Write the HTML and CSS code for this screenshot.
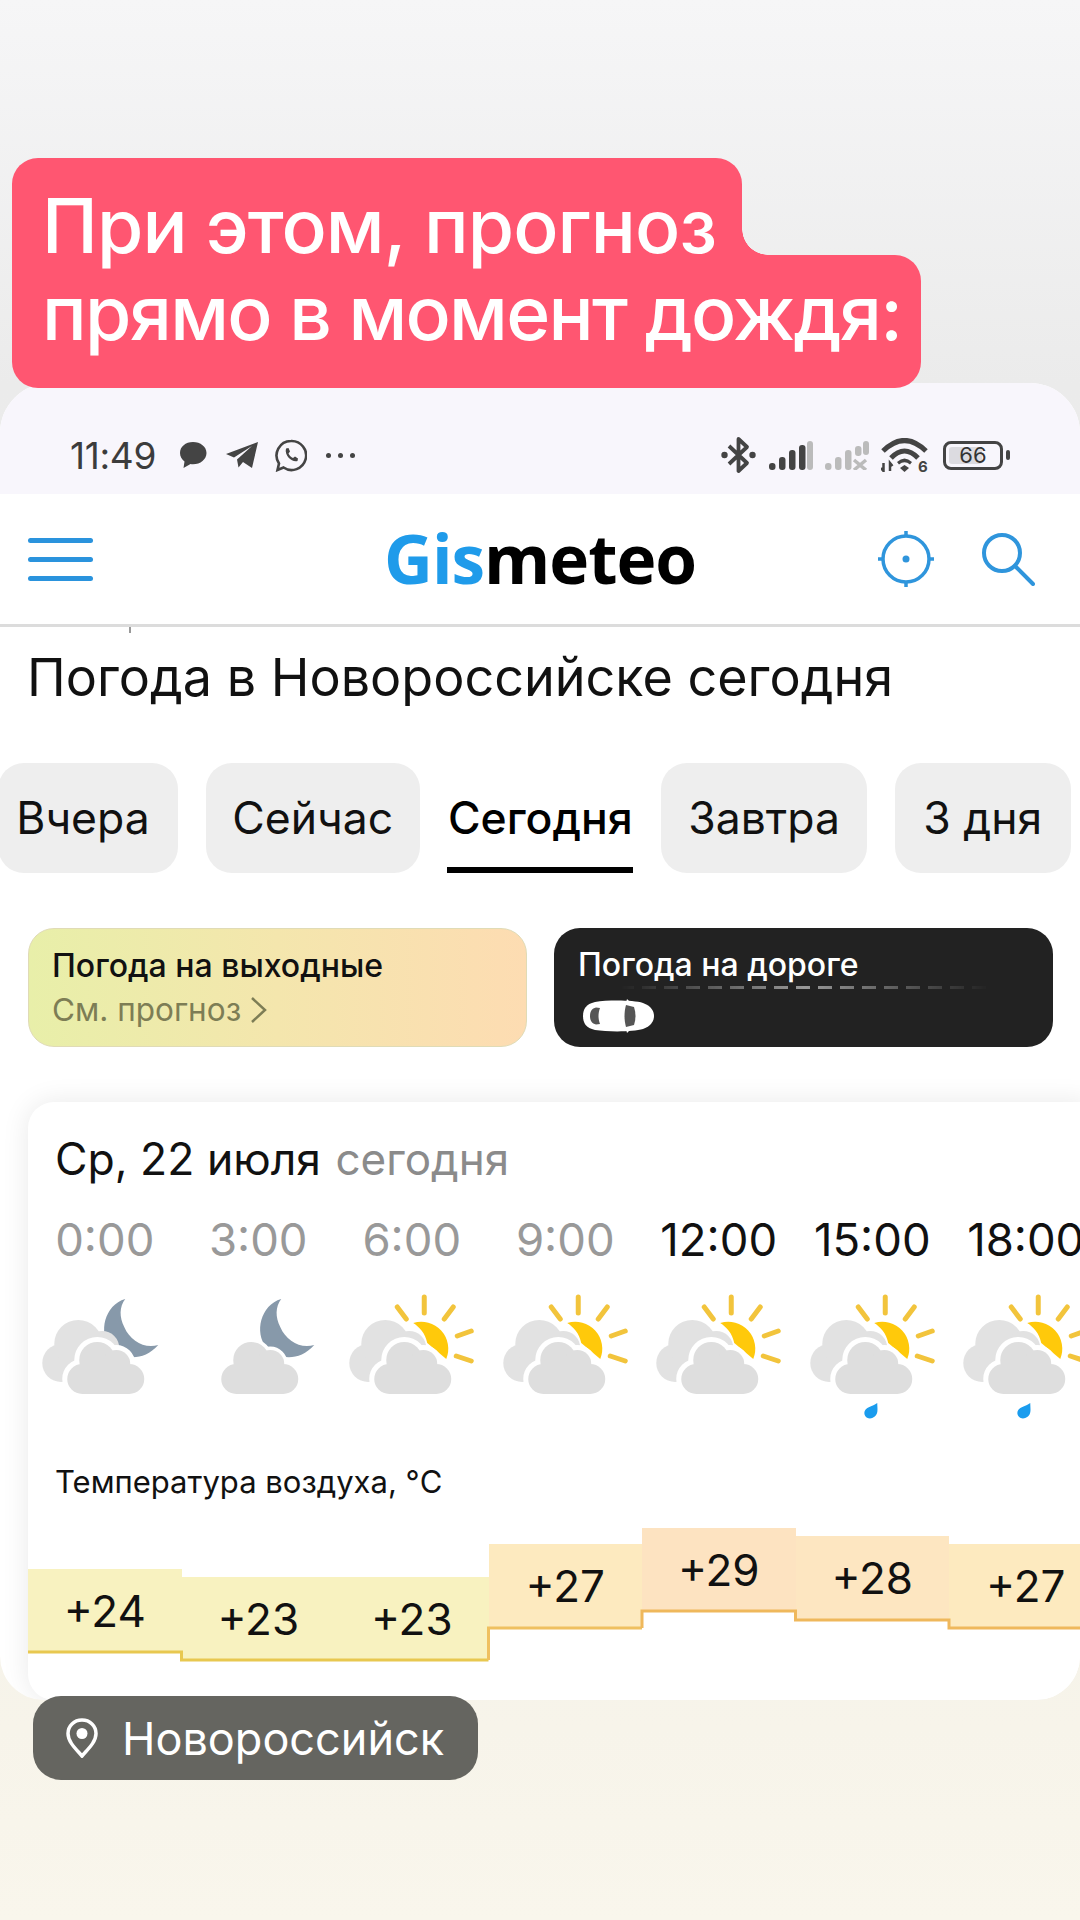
FILE: index.html
```html
<!DOCTYPE html>
<html lang="ru">
<head>
<meta charset="utf-8">
<title>Gismeteo</title>
<link rel="stylesheet" href="styles.css">
</head>
<body>
<svg class="sprite" width="0" height="0" aria-hidden="true">
  <defs>
    <g id="cloud-shape">
      <circle cx="54" cy="88" r="15"/>
      <circle cx="69" cy="69" r="18"/>
      <circle cx="88" cy="73" r="14"/>
      <circle cx="101" cy="88" r="15"/>
      <rect x="54" y="72" width="47" height="31"/>
    </g>
    <g id="back-cloud" fill="#e2e2e2">
      <circle cx="33" cy="72" r="19"/>
      <circle cx="50" cy="53" r="24"/>
      <circle cx="74" cy="57" r="17"/>
      <rect x="36" y="58" width="50" height="34"/>
    </g>
    <g id="clouds">
      <use href="#back-cloud"/>
      <use href="#cloud-shape" fill="#fff" stroke="#fff" stroke-width="10"/>
      <use href="#cloud-shape" fill="#dedede"/>
    </g>
    <g id="sun">
      <path d="M78 32A27 27 0 0 1 111 68L92 52C90 42 84 36 78 32Z" fill="#ffc90b"/>
      <g stroke="#f2c43c" stroke-width="5" stroke-linecap="round">
        <path d="M89 6V22M62 16L71 28M118 16L109 28M122 45L136 40M121 65L136 70"/>
      </g>
    </g>
    <path id="moon" d="M99 8C78 14 72 42 84 56C94 68 116 72 132 54C118 58 104 50 98 36C93 26 93 16 99 8Z" fill="#8799aa"/>
    <path id="drop" d="M81 112C81 118 83 124 76 127C71 129 66 124 69 119C71 116 77 115 81 112Z" fill="#1a9cee"/>
  </defs>
</svg>

<div class="page">
  <div class="caption">
    <div class="caption-line caption-first">При этом, прогноз</div>
    <div class="caption-line caption-second">прямо в момент дождя:</div>
  </div>

  <div class="phone">
    <div class="statusbar">
      <div class="status-group">
        <span class="clock">11:49</span>
        <svg class="st-chat" viewBox="0 0 28 28"><path d="M14 1C6.500 1 1 5.700 1 12C1 15.500 2.800 18.500 5.500 20.400L4.500 27L11.500 23.100C12.300 23.200 13.100 23.300 14 23.300C21.500 23.300 27.500 18.300 27.500 12C27.500 5.700 21.500 1 14 1Z" fill="#444"/></svg>
        <svg class="st-tg" viewBox="0 0 32 28"><path d="M32 1L26 27L17 21L12.500 26.500L11 18.500L26 5L8 16.500L0 13Z" fill="#444"/></svg>
        <svg class="st-wa" viewBox="0 0 32 33"><path d="M16 2A14.500 14.500 0 1 1 8.500 28.500L2.500 31L4 24.500A14.500 14.500 0 0 1 16 2Z" fill="none" stroke="#444" stroke-width="2.600"/><path d="M11 9.500L13.500 9L15 12.500L13.500 14.500C14.500 16.500 16 18 18 19L20 17.500L23 19.500L22.500 22C18 24 9 17 11 9.500Z" fill="#444"/></svg>
        <span class="more"><i></i><i></i><i></i></span>
      </div>
      <div class="status-group status-right">
        <svg class="st-bt" viewBox="0 0 35 38"><path d="M8 10L26 27L17.500 35V3L26 11L8 28" fill="none" stroke="#444" stroke-width="3.800" stroke-linejoin="round"/><circle cx="3.500" cy="19" r="3.200" fill="#444"/><circle cx="31.500" cy="19" r="3.200" fill="#444"/></svg>
        <svg class="st-sig" viewBox="0 0 44 29"><g fill="#444"><rect x="0" y="22" width="6.500" height="7" rx="3"/><rect x="10" y="16" width="6.500" height="13" rx="3"/><rect x="20" y="9" width="6.500" height="20" rx="3"/><rect x="30" y="4" width="6.500" height="25" rx="3"/></g><rect x="38" y="0" width="6" height="29" rx="3" fill="#bbb"/></svg>
        <svg class="st-sig" viewBox="0 0 44 29"><g fill="#bbb"><rect x="0" y="22" width="6.500" height="7" rx="3"/><rect x="10" y="16" width="6.500" height="13" rx="3"/><rect x="20" y="9" width="6.500" height="20" rx="3"/><rect x="30" y="5" width="6.500" height="10" rx="3"/><rect x="38" y="0" width="6" height="14" rx="3"/></g><path d="M29 19L41 29M41 19L29 29" stroke="#bbb" stroke-width="3.500"/></svg>
        <svg class="st-wifi" viewBox="0 0 47 34"><g fill="none" stroke="#444"><path d="M2 13Q23.500 -8 45 13" stroke-width="5"/><path d="M10 20Q23.500 6 37 20" stroke-width="5"/></g><path d="M16 24Q23.500 17 31 24L29 26.500Q23.500 22 18 26.500Z" fill="#444"/><path d="M23.500 27L28 30L23.500 34L19 30Z" fill="#444"/><path d="M2.500 25V33L0 30M9 33V25L11.500 28" fill="none" stroke="#444" stroke-width="2.500"/><text class="wifi-six" x="37" y="34">6</text></svg>
        <span class="battery"><span class="battery-box"><span class="battery-level"></span><span class="battery-num">66</span></span><span class="battery-nub"></span></span>
      </div>
    </div>

    <header class="appbar">
      <div class="burger"><i></i><i></i><i></i></div>
      <div class="logo"><span class="logo-blue">Gis</span>meteo</div>
      <div class="appbar-actions">
        <svg class="ic-target" viewBox="0 0 56 56"><g fill="none" stroke="#2f95dc" stroke-width="3.500"><circle cx="28" cy="28" r="23"/><path d="M28 0V5M28 51V56M0 28H5M51 28H56"/></g><circle cx="28" cy="28" r="3.500" fill="#2f95dc"/></svg>
        <svg class="ic-search" viewBox="0 0 54 54"><circle cx="21" cy="21" r="18" fill="none" stroke="#2f95dc" stroke-width="4"/><path d="M34 34L52 52" stroke="#2f95dc" stroke-width="4" stroke-linecap="round"/></svg>
      </div>
    </header>

    <main class="content">
      <i class="crumb-tick"></i>
      <h1 class="title">Погода в Новороссийске сегодня</h1>

      <nav class="tabs">
        <a class="tab tab-first">Вчера</a>
        <a class="tab tab-now">Сейчас</a>
        <a class="tab tab-active">Сегодня</a>
        <a class="tab tab-tomorrow">Завтра</a>
        <a class="tab tab-three">3 дня</a>
      </nav>

      <section class="promos">
        <div class="promo promo-weekend">
          <div class="promo-title">Погода на выходные</div>
          <div class="promo-sub">См. прогноз
            <svg class="chevron" viewBox="0 0 17 28"><path d="M2 2L15 14L2 26" fill="none" stroke="#7d7d55" stroke-width="2.500"/></svg>
          </div>
        </div>
        <div class="promo promo-road">
          <div class="promo-title">Погода на дороге</div>
          <div class="road-dash"></div>
          <svg class="car" viewBox="0 0 71 34">
            <path d="M12 3C25 1 50 1 60 4C68 7 71 12 71 17C71 22 68 27 60 30C50 33 25 33 12 31C3 29 0 24 0 17C0 10 3 5 12 3Z" fill="#fff"/>
            <path d="M7 17C7 12 9 9.500 13 8.500L17 9C15 14 15 20 17 25L13 25.500C9 24.500 7 22 7 17Z" fill="#555"/>
            <path d="M43 6L51 8C53 14 53 20 51 26L43 28C41 21 41 13 43 6Z" fill="#555"/>
            <path d="M43 4L44 0L48 4ZM43 30L44 34L48 30Z" fill="#fff"/>
          </svg>
        </div>
      </section>

      <section class="forecast">
        <div class="fc-date">Ср, 22 июля <span class="fc-today">сегодня</span></div>
        <div class="fc-row fc-hours">
          <div class="hour hour-past">0:00</div>
          <div class="hour hour-past">3:00</div>
          <div class="hour hour-past">6:00</div>
          <div class="hour hour-past">9:00</div>
          <div class="hour">12:00</div>
          <div class="hour">15:00</div>
          <div class="hour">18:00</div>
        </div>
        <div class="fc-row fc-icons">
          <svg class="wx" viewBox="0 0 153 130"><use href="#moon" transform="translate(-2 0)"/><use href="#clouds"/></svg>
          <svg class="wx" viewBox="0 0 153 130"><use href="#moon"/><use href="#cloud-shape" fill="#fff" stroke="#fff" stroke-width="7"/><use href="#cloud-shape" fill="#dedede"/></svg>
          <svg class="wx" viewBox="0 0 153 130"><use href="#sun"/><use href="#clouds"/></svg>
          <svg class="wx" viewBox="0 0 153 130"><use href="#sun"/><use href="#clouds"/></svg>
          <svg class="wx" viewBox="0 0 153 130"><use href="#sun"/><use href="#clouds"/></svg>
          <svg class="wx" viewBox="0 0 153 130"><use href="#sun"/><use href="#clouds"/><use href="#drop"/></svg>
          <svg class="wx" viewBox="0 0 153 130"><use href="#sun"/><use href="#clouds"/><use href="#drop"/></svg>
        </div>
        <div class="fc-label">Температура воздуха, °C</div>
        <div class="chart">
          <div class="bar bar-24"><span>+24</span></div>
          <div class="bar bar-23"><span>+23</span></div>
          <div class="bar bar-23"><span>+23</span></div>
          <div class="bar bar-27"><span>+27</span></div>
          <div class="bar bar-29"><span>+29</span></div>
          <div class="bar bar-28"><span>+28</span></div>
          <div class="bar bar-27"><span>+27</span></div>
          <svg class="chart-line" viewBox="0 0 1074 140" fill="none" stroke-width="3">
            <path d="M0 124H153.500V132H460.500" stroke="#e8c850"/>
            <path d="M460.500 132V100H614" stroke="#efc060"/>
            <path d="M614 100V83H767.500V92H921V100H1074" stroke="#efb85c"/>
          </svg>
        </div>
      </section>
    </main>
  </div>

  <div class="place">
    <svg class="pin" viewBox="0 0 32 40"><path d="M16 2C8 2 2 8 2 15.500C2 24 10 31 16 38C22 31 30 24 30 15.500C30 8 24 2 16 2Z" fill="none" stroke="#fff" stroke-width="3.500"/><circle cx="16" cy="15.500" r="5.500" fill="#fff"/></svg>
    <span>Новороссийск</span>
  </div>
</div>
</body>
</html>
```

FILE: styles.css
```css
* { box-sizing: border-box; }

html, body { margin: 0; padding: 0; }

body {
  width: 1080px;
  height: 1920px;
  overflow: hidden;
  font-family: Inter, "Noto Sans", "Liberation Sans", sans-serif;
  color: #111;
}

.sprite { position: absolute; }

.page {
  position: relative;
  width: 1080px;
  height: 1920px;
  padding-top: 383px;
  background: linear-gradient(180deg, #f6f6f7 0%, #ebebeb 20%, #f0efea 60%, #f7f4ea 90%, #f9f6ec 100%);
}

/* caption overlay */
.caption {
  position: absolute;
  z-index: 3;
  top: 158px;
  left: 12px;
  display: flex;
  flex-direction: column;
  align-items: flex-start;
  color: #fff;
  font-size: 75px;
  letter-spacing: -1.700px;
  font-weight: 500;
  line-height: 87px;
  white-space: nowrap;
}

.caption-line {
  position: relative;
  background: #ff5671;
  padding-left: 30px;
}

.caption-first {
  z-index: 1;
  width: 730px;
  height: 97px;
  padding-top: 24px;
  letter-spacing: -.900px;
  border-radius: 26px 26px 0 0;
}

.caption-second {
  width: 909px;
  height: 133px;
  padding-top: 14px;
  border-radius: 0 26px 26px 26px;
}

.caption-second::before {
  content: "";
  position: absolute;
  left: 730px;
  top: -26px;
  width: 26px;
  height: 26px;
  background: radial-gradient(circle at 100% 0, transparent 25.500px, #ff5671 26px);
}

/* phone */
.phone {
  height: 1317px;
  border-radius: 50px 50px 44px 44px;
  overflow: hidden;
  background: #fff;
  display: flex;
  flex-direction: column;
}

.statusbar {
  height: 111px;
  flex: none;
  background: #f8f6fc;
  padding: 55px 70px 0 70px;
  display: flex;
  justify-content: space-between;
  align-items: flex-start;
}

.status-group {
  display: flex;
  align-items: center;
  height: 34px;
}

.clock {
  font-size: 37px;
  letter-spacing: -.300px;
  color: #3c3c3c;
  margin-right: 24px;
  width: 85px;
}

.st-chat { width: 28px; height: 28px; margin-right: 19px; }
.st-tg { width: 32px; height: 28px; margin-right: 17px; }
.st-wa { width: 32px; height: 33px; margin-right: 19px; }

.more { display: flex; gap: 7px; }
.more i { width: 5px; height: 5px; border-radius: 50%; background: #444; }

.status-right { margin-right: 0; }

.st-bt { width: 35px; height: 38px; margin-right: 13px; }
.st-sig { width: 44px; height: 29px; margin-right: 12px; }
.st-wifi { width: 47px; height: 34px; margin-right: 15px; }

.wifi-six { font-size: 15px; font-weight: 700; fill: #444; font-family: Inter, sans-serif; }

.battery { display: flex; align-items: center; gap: 3px; }

.battery-box {
  position: relative;
  width: 60px;
  height: 29px;
  border: 3px solid #444;
  border-radius: 8px;
  display: flex;
  align-items: center;
  justify-content: center;
  padding: 3px;
}

.battery-level {
  position: absolute;
  left: 3px;
  top: 3px;
  bottom: 3px;
  width: 33px;
  background: #dcdbe0;
  border-radius: 3px;
}

.battery-num { position: relative; font-size: 22px; line-height: 1; color: #333; }

.battery-nub { width: 4px; height: 10px; border-radius: 2px; background: #444; }

/* app bar */
.appbar {
  height: 133px;
  flex: none;
  position: relative;
  display: flex;
  align-items: center;
  justify-content: space-between;
  padding: 0 45px 0 28px;
  border-bottom: 3px solid #dcdcdc;
}

.burger { width: 65px; display: flex; flex-direction: column; gap: 14px; }
.burger i { height: 5px; border-radius: 3px; background: #2a93dd; }

.logo {
  position: absolute;
  left: 384px;
  top: 22px;
  font-family: "Open Sans", sans-serif;
  font-size: 67.500px;
  font-weight: 700;
  letter-spacing: -1px;
  line-height: 84px;
  color: #000;
}

.logo-blue { color: #1f9bea; }

.appbar-actions { display: flex; align-items: center; gap: 47px; }
.ic-target { width: 56px; height: 56px; }
.ic-search { width: 54px; height: 54px; }

/* content */
.content { position: relative; flex: 1; min-height: 0; display: flex; flex-direction: column; }

.crumb-tick { position: absolute; left: 129px; top: 0; width: 2px; height: 6px; background: #999; }

.title {
  margin: 20px 0 0 27px;
  font-size: 52.100px;
  line-height: 62px;
  font-weight: 400;
  color: #111;
  white-space: nowrap;
}

.tabs {
  display: flex;
  height: 110px;
  margin: 54px 0 0 -2px;
  gap: 27.700px;
}

.tab {
  display: flex;
  align-items: center;
  justify-content: center;
  height: 110px;
  border-radius: 26px;
  background: #eee;
  font-size: 44.500px;
  color: #111;
  flex: none;
}

.tab-first { width: 180px; padding-right: 10px; }
.tab-now { width: 214px; }
.tab-tomorrow { width: 206px; }
.tab-three { width: 176px; }

.tab-active {
  width: 186px;
  background: none;
  border-radius: 0;
  border-bottom: 6px solid #000;
  font-weight: 550;
  color: #000;
  padding-top: 6px;
}

.promos {
  display: flex;
  gap: 27px;
  margin: 55px 27px 0 28px;
}

.promo {
  width: 499px;
  height: 119px;
  border-radius: 26px;
  flex: none;
}

.promo-weekend {
  padding: 18px 0 0 23px;
  background: linear-gradient(90deg, #e8efa9 0%, #f4e6ad 50%, #fddcb2 100%);
  border: 1px solid #e0dbb6;
}

.promo-road {
  padding: 18px 0 0 24px;
  background: #222;
  color: #fff;
}

.promo-title { font-size: 32px; line-height: 38px; font-weight: 500; white-space: nowrap; }

.promo-sub {
  display: flex;
  align-items: center;
  gap: 9px;
  font-size: 31.500px;
  line-height: 44px;
  color: #7d7d55;
  margin-top: 3px;
}

.chevron { width: 17px; height: 28px; }

.road-dash {
  width: 370px;
  height: 3px;
  margin: 2px 0 0 42px;
  background: repeating-linear-gradient(90deg, #999 0 14px, transparent 14px 22px);
  -webkit-mask-image: linear-gradient(90deg, transparent, #000 50%, transparent);
  mask-image: linear-gradient(90deg, transparent, #000 50%, transparent);
}

.car { display: block; width: 71px; height: 34px; margin: 10px 0 0 5px; }

/* forecast card */
.forecast {
  margin: 55px -10px 0 28px;
  flex: 1;
  min-height: 0;
  background: #fff;
  border-radius: 26px 0 0 26px;
  box-shadow: 0 0 28px rgba(0, 0, 0, .09);
}

.fc-date {
  padding: 31px 0 0 27px;
  font-size: 44.500px;
  line-height: 52px;
  color: #111;
}

.fc-today { color: #8b8b8b; margin-left: 2px; font-size: 44px; }

.fc-row { display: flex; }

.fc-hours { margin-top: 28px; }

.hour {
  width: 153.500px;
  flex: none;
  text-align: center;
  font-size: 45.500px;
  line-height: 54px;
  color: #111;
}

.hour-past { color: #999; }

.fc-icons { margin-top: 24px; }
.wx { width: 153.500px; height: 130px; flex: none; }

.fc-label {
  margin-top: 41px;
  padding-left: 27px;
  font-size: 31px;
  line-height: 40px;
  color: #111;
}

.chart {
  position: relative;
  display: flex;
  align-items: flex-start;
  margin-top: 26px;
  height: 140px;
}

.bar {
  width: 153.500px;
  height: 83px;
  flex: none;
  display: flex;
  align-items: center;
  justify-content: center;
  font-size: 44px;
  color: #111;
}

.bar-24 { margin-top: 41px; background: #f8f2c0; }
.bar-23 { margin-top: 49px; background: #f8f2c0; }
.bar-27 { margin-top: 16px; background: #fdeabf; }
.bar-28 { margin-top: 8px; background: #fde6c1; }
.bar-29 { margin-top: 0; background: #fde3c1; }

.chart-line { position: absolute; left: 0; top: 0; width: 1074px; height: 140px; }

/* place pill */
.place {
  position: absolute;
  z-index: 3;
  left: 33px;
  top: 1696px;
  width: 445px;
  height: 84px;
  border-radius: 28px;
  background: #656560;
  color: #fff;
  display: flex;
  align-items: center;
  gap: 24px;
  padding-left: 33px;
  font-size: 45px;
}

.pin { width: 32px; height: 40px; }
```
